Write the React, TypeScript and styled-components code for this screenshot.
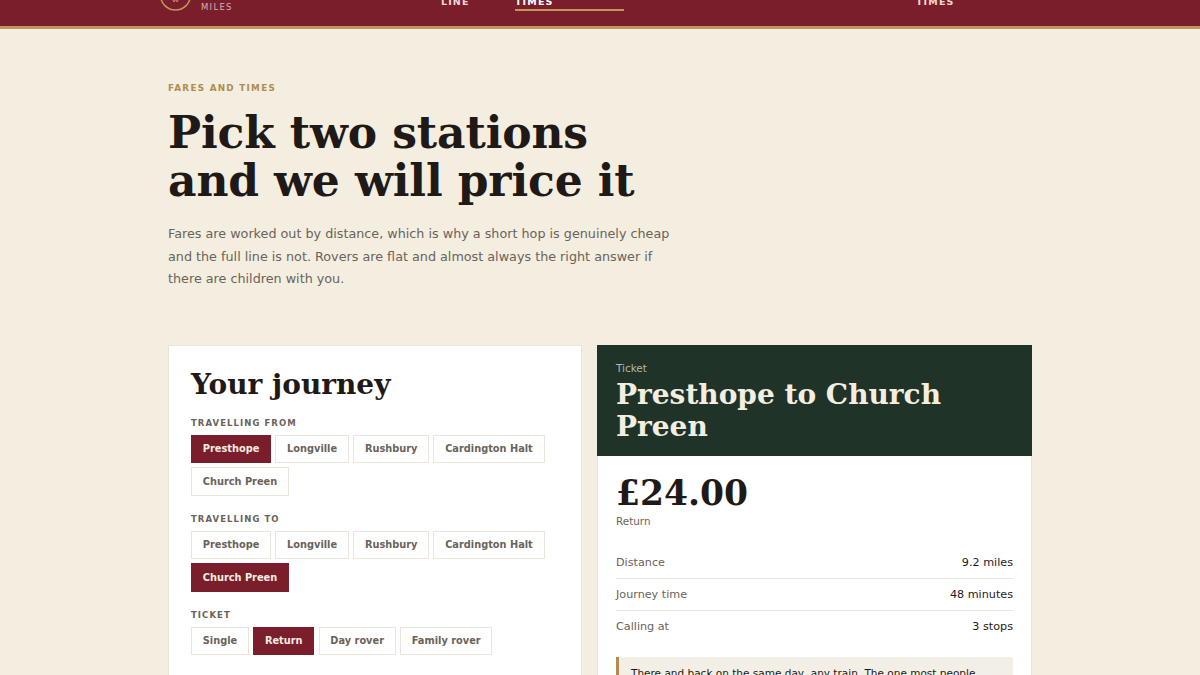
import React from "react";
import styled, { createGlobalStyle } from "styled-components";

const SANS = `"DejaVu Sans", sans-serif`;
const SERIF = `"DejaVu Serif", serif`;

const GlobalStyle = createGlobalStyle`
  html, body {
    margin: 0;
    height: 675px;
    overflow: hidden;
    background: #f4eee0;
  }
  * { box-sizing: border-box; }
`;

const Page = styled.div`
  height: 675px;
  overflow: hidden;
  font-family: ${SANS};
  color: #1f1a17;
`;

const TopBar = styled.header`
  height: 29px;
  background: #7b1e2b;
  border-bottom: 3px solid #c1965b;
  display: flex;
  justify-content: center;
  align-items: flex-end;
`;

const TopInner = styled.div`
  width: 880px;
  display: flex;
  align-items: flex-end;
`;

const Brand = styled.div`
  width: 281px;
  display: flex;
  align-items: flex-end;
  gap: 9px;
  padding-bottom: 15px;
`;

const BrandMark = styled.svg`
  width: 32px;
  height: 32px;
  flex-shrink: 0;
  display: block;
`;

const BrandSub = styled.span`
  font-size: 8.5px;
  line-height: 12px;
  letter-spacing: 0.15em;
  color: #d9aeb2;
  margin-bottom: -2px;
`;

const NavItem = styled.span<{ $active?: boolean; $width: number; $gap: number }>`
  display: block;
  width: ${({ $width }) => $width}px;
  margin-right: ${({ $gap }) => $gap}px;
  padding-bottom: ${({ $active }) => ($active ? 1 : 3)}px;
  margin-bottom: 15px;
  border-bottom: ${({ $active }) => ($active ? "2px solid #c1965b" : "none")};
  font-size: 9.5px;
  line-height: 12px;
  font-weight: 700;
  letter-spacing: 0.12em;
  color: ${({ $active }) => ($active ? "#fff" : "#f0d8d8")};
`;

const Main = styled.main`
  width: 864px;
  margin: 0 auto;
  padding-top: 53px;
`;

const Eyebrow = styled.div`
  font-size: 8.8px;
  line-height: 12px;
  font-weight: 700;
  letter-spacing: 0.145em;
  color: #b08d4e;
`;

const Title = styled.h1`
  margin: 15px 0 0;
  font-family: ${SERIF};
  font-size: 44px;
  line-height: 48px;
  letter-spacing: -0.12px;
  font-weight: 700;
`;

const Lead = styled.p`
  margin: 18px 0 0;
  width: 520px;
  font-size: 12.75px;
  line-height: 22.5px;
  color: #6b625a;
`;

const Columns = styled.div`
  margin-top: 54px;
  display: grid;
  grid-template-columns: 414px 435px;
  gap: 15px;
  align-items: start;
`;

const Card = styled.section`
  background: #fff;
  border: 1px solid #e9e5dc;
  padding: 24px 22px 22px;
  height: 400px;
`;

const CardTitle = styled.h2`
  margin: 0;
  font-family: ${SERIF};
  font-size: 28px;
  line-height: 30px;
  font-weight: 700;
`;

const FieldLabel = styled.div`
  margin-top: 17.5px;
  font-size: 8.5px;
  line-height: 12px;
  font-weight: 700;
  letter-spacing: 0.125em;
  color: #6b625a;
`;

const PillRow = styled.div`
  margin-top: 5.5px;
  display: flex;
  flex-wrap: wrap;
  gap: 4px 4.25px;
`;

const Pill = styled.button<{ $on?: boolean }>`
  height: 28.5px;
  padding: 0 10.75px;
  font-family: ${SANS};
  font-size: 9.8px;
  font-weight: 700;
  background: ${({ $on }) => ($on ? "#7b1e2b" : "#fff")};
  color: ${({ $on }) => ($on ? "#f4eee0" : "#6b625a")};
  border: 1px solid ${({ $on }) => ($on ? "#7b1e2b" : "#e9e5dc")};
`;

const TicketCard = styled.section`
  background: #fff;
  border: 1px solid #e9e5dc;
  border-top: none;
  height: 400px;
`;

const TicketHead = styled.div`
  background: #1f3329;
  margin: 0 -1px;
  padding: 16px 19px 13px;
`;

const TicketKicker = styled.div`
  font-size: 10.4px;
  line-height: 14px;
  margin-bottom: 4px;
  color: #b5b8a5;
`;

const TicketTitle = styled.h2`
  margin: 0;
  font-family: ${SERIF};
  font-size: 28px;
  line-height: 32px;
  font-weight: 700;
  color: #f4eee0;
`;

const TicketBody = styled.div`
  padding: 16px 18px 0;
`;

const Price = styled.div`
  font-family: ${SERIF};
  font-size: 34.5px;
  line-height: 42px;
  font-weight: 700;
`;

const PriceNote = styled.div`
  font-size: 10.4px;
  line-height: 14px;
  color: #6b625a;
`;

const Facts = styled.div`
  margin-top: 19px;
`;

const Fact = styled.div`
  height: 32px;
  display: flex;
  justify-content: space-between;
  align-items: center;
  font-size: 11.2px;
  border-bottom: 1px solid #e9e5dc;
  &:last-child { border-bottom: none; }
`;

const FactLabel = styled.span`
  color: #6b625a;
`;

const Note = styled.div`
  margin-top: 14px;
  padding: 7px 12px;
  background: #f4efe6;
  border-left: 3px solid #b08d4e;
  border-radius: 0 2px 2px 0;
  font-size: 10.5px;
  line-height: 18px;
`;

const stations = ["Presthope", "Longville", "Rushbury", "Cardington Halt", "Church Preen"];
const tickets = ["Single", "Return", "Day rover", "Family rover"];

const Choices = ({ label, items, picked }: { label: string; items: string[]; picked: string }) => (
  <>
    <FieldLabel>{label}</FieldLabel>
    <PillRow>
      {items.map((item) => (
        <Pill key={item} $on={item === picked}>{item}</Pill>
      ))}
    </PillRow>
  </>
);

export default function App() {
  return (
    <Page>
      <GlobalStyle />
      <TopBar>
        <TopInner>
          <Brand>
            <BrandMark viewBox="0 0 32 32">
              <circle cx="15.5" cy="16" r="15" fill="none" stroke="#c1965b" strokeWidth="1.5" />
              <path d="M12.5 20 L14 23 L15.5 20.5 L17 23 L18.5 20" fill="none" stroke="#c1965b" strokeWidth="1" />
            </BrandMark>
            <BrandSub>MILES</BrandSub>
          </Brand>
          <NavItem $width={65} $gap={9}>LINE</NavItem>
          <NavItem $active $width={109} $gap={292}>TIMES</NavItem>
          <NavItem $width={60} $gap={0}>TIMES</NavItem>
        </TopInner>
      </TopBar>
      <Main>
        <Eyebrow>FARES AND TIMES</Eyebrow>
        <Title>Pick two stations<br />and we will price it</Title>
        <Lead>
          Fares are worked out by distance, which is why a short hop is genuinely cheap and the full line is not. Rovers are flat and almost always the right answer if there are children with you.
        </Lead>
        <Columns>
          <Card>
            <CardTitle>Your journey</CardTitle>
            <Choices label="TRAVELLING FROM" items={stations} picked="Presthope" />
            <Choices label="TRAVELLING TO" items={stations} picked="Church Preen" />
            <Choices label="TICKET" items={tickets} picked="Return" />
          </Card>
          <TicketCard>
            <TicketHead>
              <TicketKicker>Ticket</TicketKicker>
              <TicketTitle>Presthope to Church Preen</TicketTitle>
            </TicketHead>
            <TicketBody>
              <Price>£24.00</Price>
              <PriceNote>Return</PriceNote>
              <Facts>
                <Fact><FactLabel>Distance</FactLabel><span>9.2 miles</span></Fact>
                <Fact><FactLabel>Journey time</FactLabel><span>48 minutes</span></Fact>
                <Fact><FactLabel>Calling at</FactLabel><span>3 stops</span></Fact>
              </Facts>
              <Note>There and back on the same day, any train. The one most people want.</Note>
            </TicketBody>
          </TicketCard>
        </Columns>
      </Main>
    </Page>
  );
}
